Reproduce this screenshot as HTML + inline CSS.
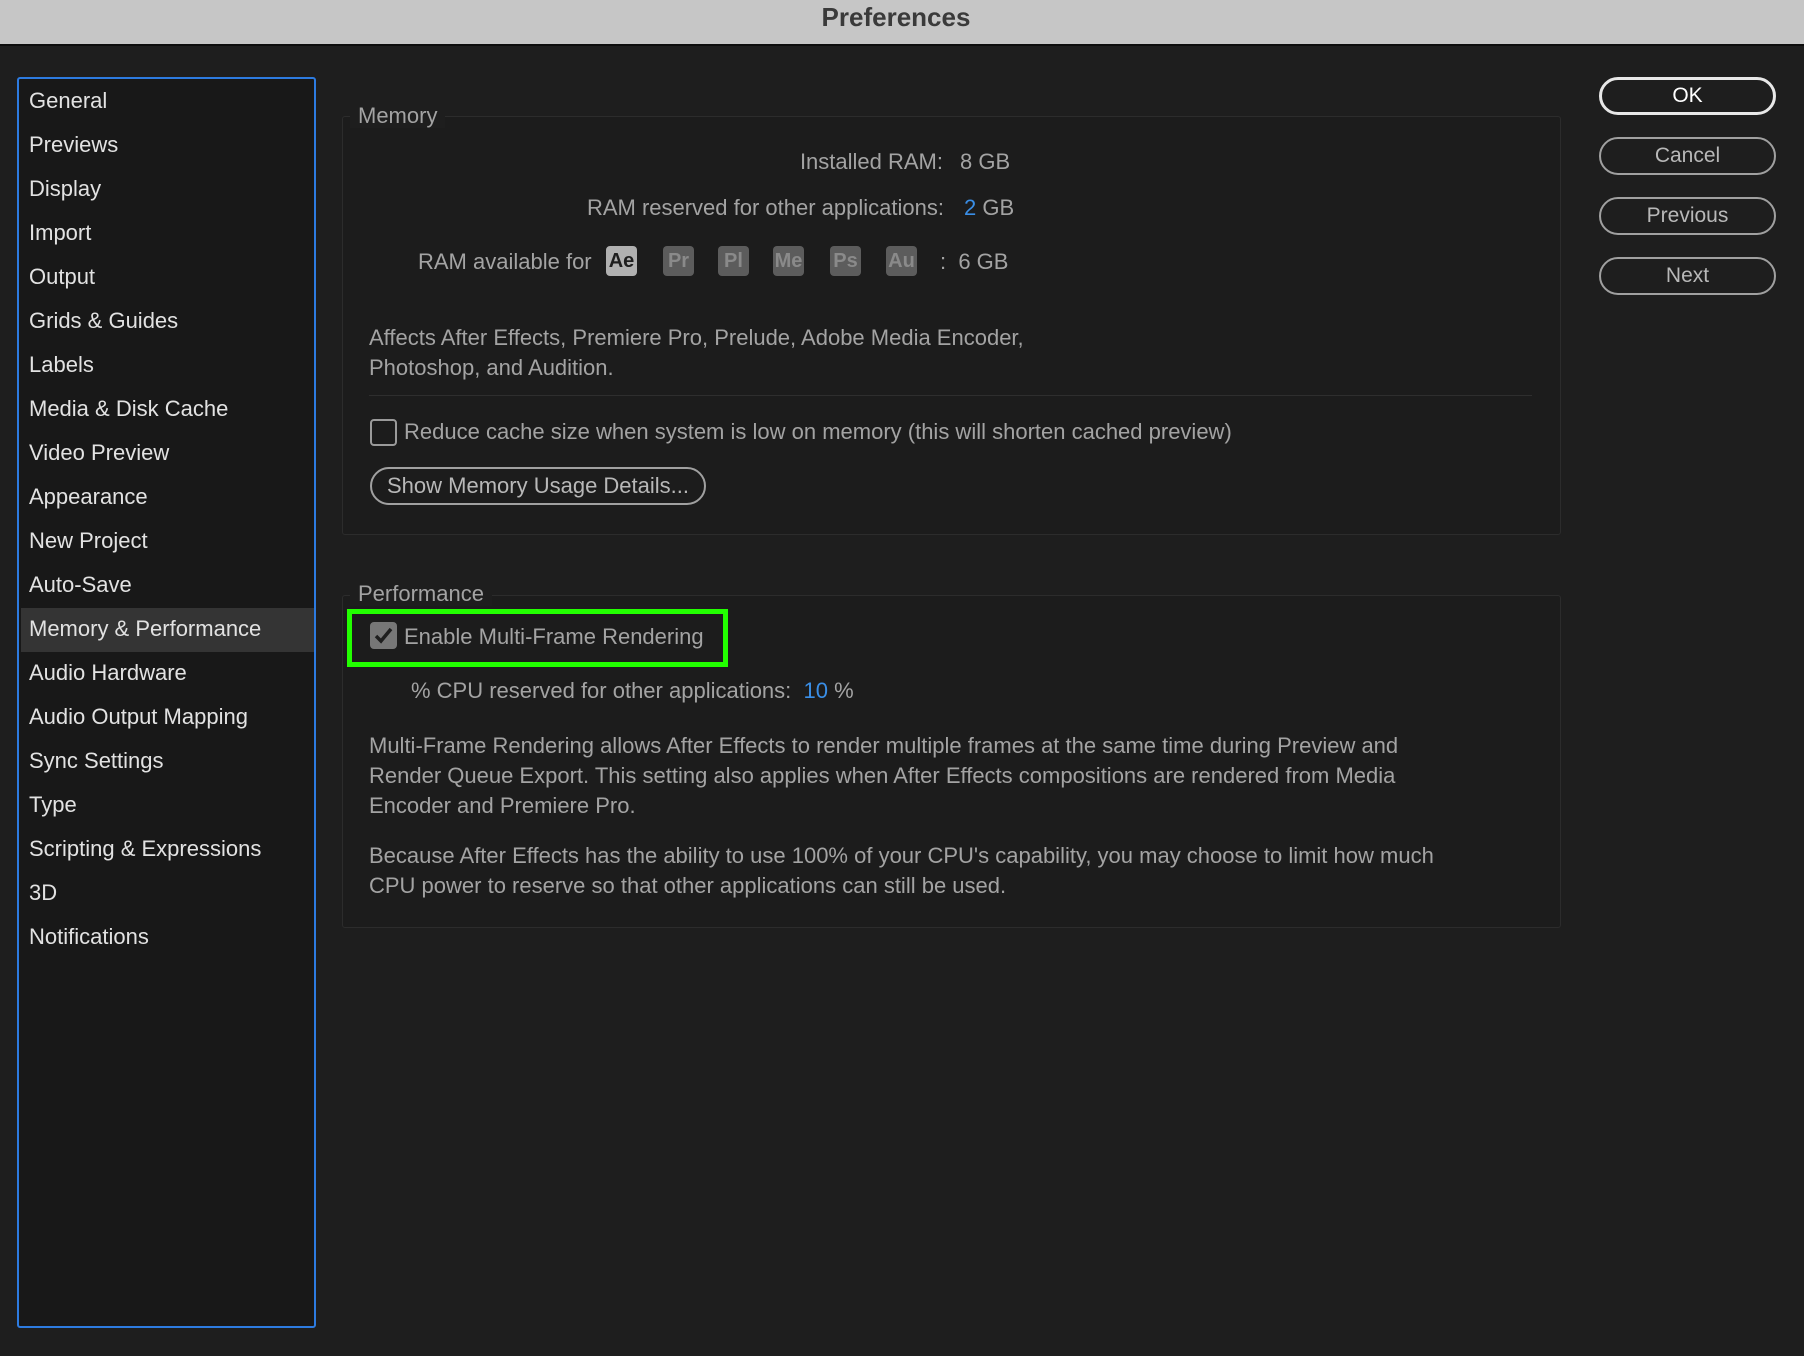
<!DOCTYPE html>
<html><head><meta charset="utf-8"><style>
*{margin:0;padding:0;box-sizing:border-box}
body{width:1804px;height:1356px;background:#1e1e1e;font-family:"Liberation Sans",sans-serif;color:#a3a3a3;font-size:22px;position:relative;overflow:hidden}
.a{position:absolute;white-space:nowrap}
#title{left:-12px;top:0;width:1816px;height:46px;background:#c6c6c6;border-bottom:2px solid #0d0d0d;text-align:center;font-weight:bold;font-size:26px;line-height:34px;color:#3a3a3a}
#side{left:17px;top:77px;width:299px;height:1251px;background:#181818;border:2px solid #2d7be0;border-radius:3px}
.it{position:absolute;left:10px;color:#e2e2e2;font-size:22px;height:44px;line-height:44px}
#sel{position:absolute;left:2px;top:529px;width:293px;height:44px;background:#343434}
.box{position:absolute;border:1px solid #2c2c2c;border-radius:3px}
.lbl{background:#1e1e1e;padding:0 8px;font-size:22px;color:#a3a3a3;line-height:24px}
.btn{position:absolute;left:1599px;width:177px;height:38px;border:2px solid #a0a0a0;border-radius:19px;text-align:center;line-height:34px;color:#b8b8b8;font-size:21px}
.bd{position:absolute;top:246px;width:31px;height:30px;border-radius:4px;background:#5c5c5c;color:#8a8a8a;font-weight:bold;text-align:center;line-height:30px;font-size:20px}
.blue{color:#3a8ee6}
.cb{position:absolute;width:27px;height:27px;border:2px solid #9a9a9a;border-radius:4px}
</style></head><body>
<div id="title" class="a">Preferences</div>
<div id="side" class="a">
<div id="sel"></div>
<div class="it" style="top:0">General</div>
<div class="it" style="top:44px">Previews</div>
<div class="it" style="top:88px">Display</div>
<div class="it" style="top:132px">Import</div>
<div class="it" style="top:176px">Output</div>
<div class="it" style="top:220px">Grids &amp; Guides</div>
<div class="it" style="top:264px">Labels</div>
<div class="it" style="top:308px">Media &amp; Disk Cache</div>
<div class="it" style="top:352px">Video Preview</div>
<div class="it" style="top:396px">Appearance</div>
<div class="it" style="top:440px">New Project</div>
<div class="it" style="top:484px">Auto-Save</div>
<div class="it" style="top:528px">Memory &amp; Performance</div>
<div class="it" style="top:572px">Audio Hardware</div>
<div class="it" style="top:616px">Audio Output Mapping</div>
<div class="it" style="top:660px">Sync Settings</div>
<div class="it" style="top:704px">Type</div>
<div class="it" style="top:748px">Scripting &amp; Expressions</div>
<div class="it" style="top:792px">3D</div>
<div class="it" style="top:836px">Notifications</div>
</div>

<div class="box" style="left:342px;top:116px;width:1219px;height:419px;background:#1c1c1c"></div>
<div class="a lbl" style="left:350px;top:104px">Memory</div>
<div class="a" style="right:861px;top:149px">Installed RAM:</div>
<div class="a" style="left:960px;top:149px">8 GB</div>
<div class="a" style="right:860px;top:195px">RAM reserved for other applications:</div>
<div class="a" style="left:964px;top:195px"><span class="blue">2</span> GB</div>
<div class="a" style="left:418px;top:249px">RAM available for</div>
<div class="bd" style="left:606px;background:#b0b0b0;color:#1e1e1e">Ae</div>
<div class="bd" style="left:663px">Pr</div>
<div class="bd" style="left:718px">Pl</div>
<div class="bd" style="left:773px">Me</div>
<div class="bd" style="left:830px">Ps</div>
<div class="bd" style="left:886px">Au</div>
<div class="a" style="left:940px;top:249px">:&nbsp; 6 GB</div>
<div class="a" style="left:369px;top:323px;line-height:30px">Affects After Effects, Premiere Pro, Prelude, Adobe Media Encoder,<br>Photoshop, and Audition.</div>
<div class="a" style="left:369px;top:395px;width:1163px;height:1px;background:#2e2e2e"></div>
<div class="cb" style="left:370px;top:419px"></div>
<div class="a" style="left:404px;top:419px">Reduce cache size when system is low on memory (this will shorten cached preview)</div>
<div class="a" style="left:370px;top:467px;width:336px;height:38px;border:2px solid #a0a0a0;border-radius:19px;text-align:center;line-height:34px;color:#b8b8b8">Show Memory Usage Details...</div>

<div class="box" style="left:342px;top:595px;width:1219px;height:333px;background:#1c1c1c"></div>
<div class="a lbl" style="left:350px;top:582px">Performance</div>
<div class="a" style="left:347px;top:609px;width:381px;height:58px;border:5px solid #22ff00"></div>
<div class="cb" style="left:370px;top:622px;background:#777;border-color:#777"><svg width="23" height="23" viewBox="0 0 23 23"><path d="M4 12 L9 17 L19 5" fill="none" stroke="#1e1e1e" stroke-width="3.5"/></svg></div>
<div class="a" style="left:404px;top:624px">Enable Multi-Frame Rendering</div>
<div class="a" style="left:411px;top:678px">% CPU reserved for other applications:&nbsp; <span class="blue">10</span> %</div>
<div class="a" style="left:369px;top:731px;line-height:30px">Multi-Frame Rendering allows After Effects to render multiple frames at the same time during Preview and<br>Render Queue Export. This setting also applies when After Effects compositions are rendered from Media<br>Encoder and Premiere Pro.</div>
<div class="a" style="left:369px;top:841px;line-height:30px">Because After Effects has the ability to use 100% of your CPU's capability, you may choose to limit how much<br>CPU power to reserve so that other applications can still be used.</div>

<div class="btn" style="top:77px;border:3px solid #e8e8e8;color:#fff;line-height:32px">OK</div>
<div class="btn" style="top:137px">Cancel</div>
<div class="btn" style="top:197px">Previous</div>
<div class="btn" style="top:257px">Next</div>
</body></html>
